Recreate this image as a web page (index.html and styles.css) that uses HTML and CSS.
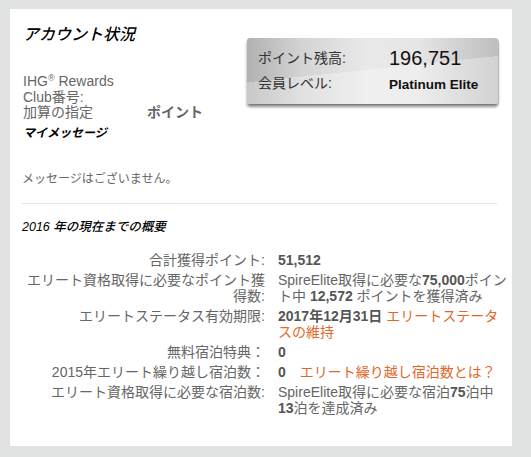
FILE: index.html
```html
<!DOCTYPE html>
<html lang="ja">
<head>
<meta charset="utf-8">
<title>アカウント状況</title>
<link rel="stylesheet" href="styles.css">
</head>
<body>
<div class="page">
  <div class="panel">
    <div class="header">
      <div class="account">
        <h1 class="title">アカウント状況</h1>
        <div class="info">
          <div class="info-label">IHG<sup>®</sup> Rewards Club番号:</div>
          <div class="info-value"></div>
          <div class="info-label">加算の指定</div>
          <div class="info-value strong">ポイント</div>
        </div>
        <h2 class="subtitle">マイメッセージ</h2>
        <p class="message">メッセージはございません。</p>
      </div>
      <div class="points-box">
        <div class="pb-label">ポイント残高:</div>
        <div class="pb-value big">196,751</div>
        <div class="pb-label">会員レベル:</div>
        <div class="pb-value level">Platinum Elite</div>
      </div>
    </div>
    <hr class="divider">
    <h2 class="year-title">2016 年の現在までの概要</h2>
    <div class="summary">
      <div class="s-label">合計獲得ポイント:</div>
      <div class="s-value"><b>51,512</b></div>
      <div class="s-label">エリート資格取得に必要なポイント獲得数:</div>
      <div class="s-value">SpireElite取得に必要な<b>75,000</b>ポイント中 <b>12,572</b> ポイントを獲得済み</div>
      <div class="s-label">エリートステータス有効期限:</div>
      <div class="s-value"><b>2017年12月31日</b> <a class="link" href="#">エリートステータスの維持</a></div>
      <div class="s-label">無料宿泊特典：</div>
      <div class="s-value"><b>0</b></div>
      <div class="s-label">2015年エリート繰り越し宿泊数：</div>
      <div class="s-value"><b>0</b> <a class="link gap" href="#">エリート繰り越し宿泊数とは？</a></div>
      <div class="s-label">エリート資格取得に必要な宿泊数:</div>
      <div class="s-value">SpireElite取得に必要な宿泊<b>75</b>泊中<b>13</b>泊を達成済み</div>
    </div>
  </div>
</div>
</body>
</html>
```

FILE: styles.css
```css
html, body {
  margin: 0;
  padding: 0;
}

body {
  background: #e1e3e2;
  font-family: "Liberation Sans", "Noto Sans CJK JP", sans-serif;
  color: #666;
}

.page {
  height: 457px;
  box-sizing: border-box;
  padding: 9px 19px 11px 10px;
}

.panel {
  height: 100%;
  box-sizing: border-box;
  background: #fff;
  padding: 16px 4px 0 12px;
}

.header {
  display: flex;
  align-items: flex-start;
}

.account {
  flex: 1;
}

.title {
  margin: 0 0 0 1px;
  font-size: 16px;
  line-height: 20px;
  font-weight: 500;
  font-style: italic;
  color: #000;
}

.info {
  display: grid;
  grid-template-columns: 100px auto;
  column-gap: 24px;
  margin-top: 29px;
  margin-left: 1px;
  font-size: 14px;
  line-height: 15.5px;
}

.info sup {
  font-size: 9px;
  line-height: 0;
  vertical-align: 5px;
}

.strong {
  font-weight: bold;
  color: #666;
  align-self: end;
}

.subtitle {
  margin: 4px 0 0 1px;
  font-size: 12px;
  line-height: 16px;
  font-weight: bold;
  font-style: italic;
  color: #000;
}

.message {
  margin: 30px 0 0 0;
  font-size: 12px;
  line-height: 16px;
  color: #666;
}

.points-box {
  width: 251px;
  margin: 13px 10px 0 0;
  box-sizing: border-box;
  padding: 8px 0 6px 11px;
  display: grid;
  grid-template-columns: 131px auto;
  border-radius: 3px;
  background:
    linear-gradient(174deg, rgba(255,255,255,0) 0 48%, rgba(255,255,255,0.3) 48% 100%),
    linear-gradient(90deg, #b1b1b1 0%, #d4d4d4 22%, #e9e9e9 48%, #e6e6e6 68%, #bebebe 100%);
  box-shadow: 0 3px 3px rgba(0,0,0,0.45), 1px 1px 1px rgba(0,0,0,0.15);
}

.pb-label {
  font-size: 14px;
  line-height: 25px;
  color: #333;
}

.pb-value {
  line-height: 25px;
  color: #111;
}

.big {
  font-size: 20px;
}

.level {
  font-size: 13.5px;
  font-weight: bold;
  line-height: 27px;
}

.divider {
  margin: 16px 11px 0 0;
  border: 0;
  border-top: 1px solid #e3e3e3;
  height: 0;
}

.year-title {
  margin: 15px 0 0 0;
  font-size: 12.5px;
  line-height: 16px;
  font-weight: 500;
  font-style: italic;
  color: #000;
}

.summary {
  display: grid;
  grid-template-columns: 243px 230px;
  column-gap: 13px;
  row-gap: 4px;
  margin-top: 17px;
  font-size: 14px;
  line-height: 16px;
}

.s-label {
  text-align: right;
  color: #666;
}

.s-value {
  color: #666;
}

.s-value b {
  color: #555;
}

.link {
  color: #e2672a;
  text-decoration: none;
}

.link.gap {
  margin-left: 10px;
}
```
